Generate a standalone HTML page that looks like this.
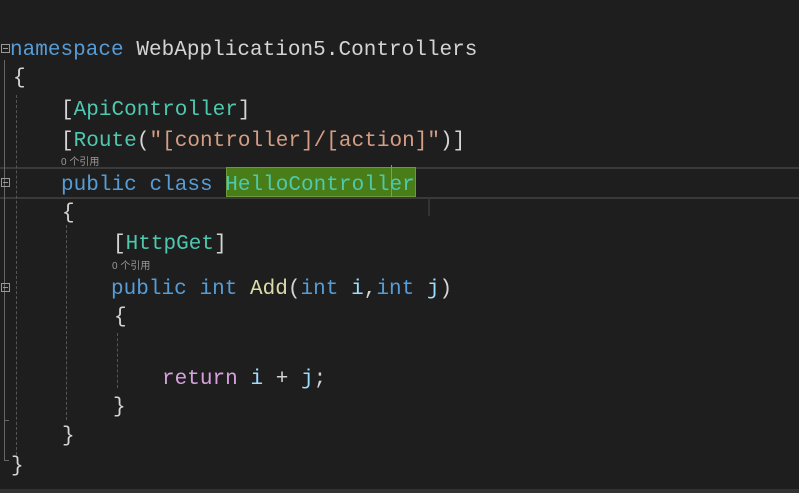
<!DOCTYPE html>
<html><head><meta charset="utf-8"><style>
body{margin:0;width:799px;height:493px;background:#1e1e1e;overflow:hidden;position:relative;font-family:"Liberation Mono",monospace;}
.l{position:absolute;font-size:21px;letter-spacing:0.03px;white-space:pre;color:#d4d4d4;line-height:24px;}
.k{color:#569cd6}.t{color:#4ec9b0}.s{color:#d69d85}.m{color:#dcdcaa}.v{color:#9cdcfe}.r{color:#d8a0df}.p{color:#d4d4d4}
.c{position:absolute;font-family:"Liberation Sans","Noto Sans CJK SC",sans-serif;font-size:10px;color:#999;}
.g{position:absolute;border-left:1px dashed #555;}
.f{position:absolute;width:7px;height:7px;border:1px solid #999;font-size:0;}
.f:after{content:"";position:absolute;left:1px;top:3px;width:5px;height:1px;background:#999;}
</style></head><body>
<div style="position:absolute;left:0;top:167px;width:799px;height:28px;border-top:2px solid #3a3a3a;border-bottom:2px solid #3a3a3a"></div>
<div style="position:absolute;left:226px;top:167px;width:190px;height:30px;background:#487d18;border:1px solid #6a9a3a;box-sizing:border-box"></div>
<div style="position:absolute;left:391px;top:165px;width:1px;height:32px;background:#8080ff"></div>
<div style="position:absolute;left:428px;top:198px;width:2px;height:18px;background:#333"></div>
<div style="position:absolute;left:4px;top:60px;width:1px;height:400px;background:#666"></div>
<div style="position:absolute;left:4px;top:460px;width:5px;height:1px;background:#666"></div>
<div style="position:absolute;left:4px;top:420px;width:5px;height:1px;background:#666"></div>
<div class="g" style="left:16px;top:95px;height:360px"></div>
<div class="g" style="left:66px;top:225px;height:195px"></div>
<div class="g" style="left:117px;top:333px;height:55px"></div>
<div class="f" style="left:1px;top:44px"></div>
<div class="f" style="left:1px;top:178px"></div>
<div class="f" style="left:1px;top:283px"></div>
<div class="l" style="left:10px;top:39px"><span class="k">namespace</span> WebApplication5.Controllers</div>
<div class="l" style="left:13px;top:67px">{</div>
<div class="l" style="left:61px;top:99px">[<span class="t">ApiController</span>]</div>
<div class="l" style="left:61px;top:130px">[<span class="t">Route</span>(<span class="s">"[controller]/[action]"</span>)]</div>
<div class="c" style="left:61px;top:153px">0 个引用</div>
<div class="l" style="left:61px;top:174px"><span class="k">public</span> <span class="k">class</span> <span class="t">HelloController</span></div>
<div class="l" style="left:62px;top:202px">{</div>
<div class="l" style="left:113px;top:233px">[<span class="t">HttpGet</span>]</div>
<div class="c" style="left:112px;top:257px">0 个引用</div>
<div class="l" style="left:111px;top:278px"><span class="k">public</span> <span class="k">int</span> <span class="m">Add</span>(<span class="k">int</span> <span class="v">i</span>,<span class="k">int</span> <span class="v">j</span>)</div>
<div class="l" style="left:114px;top:306px">{</div>
<div class="l" style="left:162px;top:368px"><span class="r">return</span> <span class="v">i</span> + <span class="v">j</span>;</div>
<div class="l" style="left:113px;top:396px">}</div>
<div class="l" style="left:62px;top:425px">}</div>
<div class="l" style="left:11px;top:455px">}</div>
<div style="position:absolute;left:0;top:489px;width:799px;height:4px;background:#333"></div>
</body></html>
